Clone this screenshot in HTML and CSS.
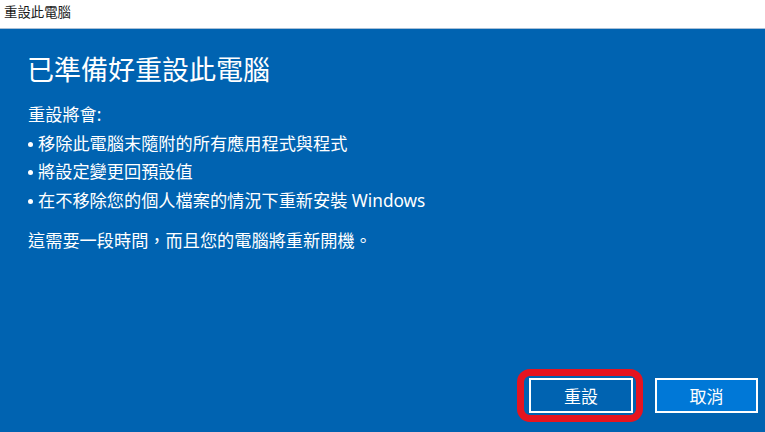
FILE: index.html
```html
<!DOCTYPE html>
<html lang="zh-Hant-TW">
<head>
<meta charset="utf-8">
<title>重設此電腦</title>
<link rel="stylesheet" href="styles.css">
</head>
<body>
<div class="window">
  <div class="titlebar">重設此電腦</div>
  <div class="main">
    <h1 class="heading">已準備好重設此電腦</h1>
    <p class="intro">重設將會:</p>
    <ul class="list">
      <li>移除此電腦末隨附的所有應用程式與程式</li>
      <li>將設定變更回預設值</li>
      <li>在不移除您的個人檔案的情況下重新安裝 Windows</li>
    </ul>
    <p class="note">這需要一段時間，而且您的電腦將重新開機。</p>
    <div class="actions">
      <span class="highlight"><button class="btn btn-primary">重設</button></span>
      <button class="btn btn-secondary">取消</button>
    </div>
  </div>
</div>
</body>
</html>
```

FILE: styles.css
```css
html, body {
  margin: 0;
  padding: 0;
  height: 100%;
}
body {
  font-family: "Noto Sans", "Noto Sans CJK TC", sans-serif;
  background: #0063b1;
}
.window {
  display: flex;
  flex-direction: column;
  height: 432px;
  width: 765px;
  overflow: hidden;
}
.titlebar {
  height: 28px;
  background: #ffffff;
  border-bottom: 1px solid #a9bfd6;
  color: #1a1a1a;
  font-size: 13.4px;
  line-height: 25px;
  padding-left: 4px;
  box-sizing: content-box;
}
.main {
  flex: 1;
  display: flex;
  flex-direction: column;
  padding: 23px 7px 19px 28px;
  color: #ffffff;
  font-size: 17.2px;
}
.heading {
  margin: 0 0 0 -1px;
  font-size: 27px;
  font-weight: 400;
  line-height: 36px;
}
.intro {
  margin: 13px 0 0;
  line-height: 28.5px;
}
.list {
  list-style: none;
  margin: 0;
  padding: 0;
}
.list li {
  line-height: 28.5px;
  display: flex;
  align-items: center;
}
.list li::before {
  content: "";
  width: 5px;
  height: 5px;
  border-radius: 50%;
  background: #ffffff;
  margin: 1px 5px 0 0;
  flex: none;
}
.note {
  margin: 12px 0 0;
  line-height: 28.5px;
}
.actions {
  margin-top: auto;
  display: flex;
  justify-content: flex-end;
  gap: 22px;
}
.highlight {
  position: relative;
  display: inline-flex;
}
.highlight::after {
  content: "";
  position: absolute;
  left: -12px;
  right: -10px;
  top: -9px;
  bottom: -9px;
  border: 7px solid #e6141f;
  border-radius: 13px;
  pointer-events: none;
}
.btn {
  height: 35px;
  border: 2px solid #ffffff;
  color: #ffffff;
  font-family: inherit;
  font-size: 17px;
  padding: 0;
  margin: 0;
  box-sizing: border-box;
}
.btn-primary {
  width: 104px;
  background: #0063b1;
}
.btn-secondary {
  width: 103px;
  background: #0078d7;
}
```
